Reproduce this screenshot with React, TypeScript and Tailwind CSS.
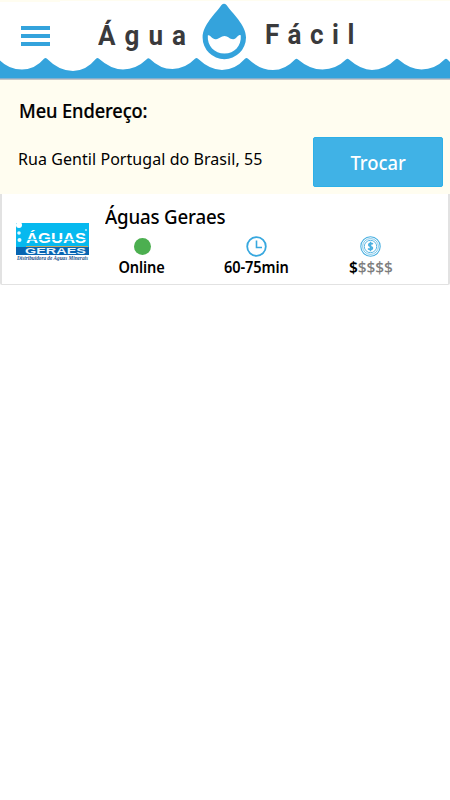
import type { ReactNode } from 'react';

interface Store {
  name: string;
  online: boolean;
  deliveryTime: string;
  priceLevel: number;
}

const store: Store = {
  name: 'Águas Geraes',
  online: true,
  deliveryTime: '60-75min',
  priceLevel: 1,
};

function Waves() {
  return (
    <svg className="absolute inset-x-0 top-0 h-20 w-full" viewBox="0 0 450 80" aria-hidden="true">
      <path
        fill="#34a3dc"
        d="M0 60.5Q9 69.5 22 69.5Q35 69.5 44 58.8Q45.5 57.2 47 58.8Q59 71 73 71Q86 71 96 58.8Q97.5 57.2 99 58.8Q111 69.5 123 69.5Q136 69.5 147 59Q148 57.4 150 59Q160 69 172.5 69Q185 69 195 58.8Q196.5 57.2 198 58.8Q210 70 222 70Q235 70 245 58.8Q246.5 57.2 248 58.8Q260 70 273 70Q285 70 295 59.4Q296.5 58 298 59.4Q310 69.5 322.5 69.5Q336 69.5 346 59.6Q347.5 58 349 59.6Q361 70 372 70Q385 70 395.5 59.6Q397 58 398.5 59.6Q410 69.5 421.5 69.5Q435 69.5 444.5 59.6Q446 58 447.5 59.6L450 62V78H0Z"
      />
      <rect y="78" width="450" height="1" fill="#83afcd" />
      <rect y="79" width="450" height="1" fill="#c4c5c8" />
    </svg>
  );
}

function DropLogo() {
  return (
    <svg className="absolute left-[202px] top-[3px] h-[57px] w-[45px]" viewBox="0 0 45 57" aria-hidden="true">
      <path fill="#34a3dc" d="M19.5 2Q22 -.4 24.5 2C30 10 44 22 44 34.5A21.7 21.7 0 0 1 .6 34.5C.6 22 14 10 19.5 2Z" />
      <path fill="#fff" d="M5.8 32.5C8 31 10 36.7 14 36.2C17.5 36 19 33 22.5 33C26 33 27.5 36.2 31 36.2C35 36.5 36 30.5 38.8 32.5C39.5 43 32.5 50.5 22.5 50.5C12.5 50.5 5 43 5.8 32.5Z" />
    </svg>
  );
}

function Header() {
  return (
    <header className="relative h-20 bg-white">
      <Waves />
      <div className="absolute inset-x-0 top-0 flex h-0.5">
        <div className="w-[60px] bg-[#fffdf0]" />
        <div className="h-px flex-1 bg-[#fffdf0]" />
      </div>
      <button aria-label="Menu" className="absolute left-[21px] top-[26px] flex w-[29px] flex-col gap-1">
        <span className="h-1 bg-[#34a3dc]" />
        <span className="h-1 bg-[#34a3dc]" />
        <span className="h-1 bg-[#34a3dc]" />
      </button>
      <h1 className="font-[Roboto,sans-serif] text-[28px] font-bold leading-8 text-[#3a3a3c]">
        <span className="absolute left-[98px] top-[20px] origin-left scale-x-[.93] tracking-[9.7px]">Água</span>
        <span className="absolute left-[265px] top-[19px] origin-left scale-x-[.93] tracking-[9.2px]">Fácil</span>
      </h1>
      <DropLogo />
    </header>
  );
}

function AddressBar() {
  return (
    <section className="flex h-[114px] flex-col bg-[#fffdf0] pl-[18px] pr-[7px] pt-[18px]">
      <h2 className="ml-[0.5px] h-[25px] origin-left scale-x-[.96] text-[19px] font-medium leading-[26px] tracking-[-0.1px] [-webkit-text-stroke:0.2px_black]">
        Meu Endereço:
      </h2>
      <div className="mt-[14px] flex items-start justify-between">
        <p className="mt-[10px] whitespace-nowrap text-[16px] leading-[25px] tracking-[0.06px]">Rua Gentil Portugal do Brasil, 55</p>
        <button className="h-[50px] w-[130px] rounded-[2px] border border-[#2db0e8] bg-[#40b2e6] pt-0.5 text-[20px] font-medium text-white">
          <span className="inline-block scale-x-[.92]">Trocar</span>
        </button>
      </div>
    </section>
  );
}

function StoreLogo() {
  return (
    <svg className="h-[40px] w-[75px] overflow-visible" viewBox="0 0 75 40">
      <rect x="1" y="1" width="73" height="24" fill="#06b9ef" />
      <rect x="1" y="25" width="73" height="8" fill="#0865b2" />
      <rect x="11" y="24" width="62" height="1" fill="#c5a561" />
      <circle cx="4" cy="3" r="3" fill="#fff" />
      <circle cx="4" cy="11" r="1.8" fill="#e5faff" />
      <circle cx="4.5" cy="18" r="2" fill="#e5faff" />
      <text x="11" y="20.5" textLength="60" lengthAdjust="spacingAndGlyphs" fill="#fff" className="font-['Liberation_Sans',sans-serif] text-[15.5px] font-bold">ÁGUAS</text>
      <rect x="10" y="17" width="61" height="0.8" fill="#06b9ef" />
      <text x="10" y="32" textLength="61" lengthAdjust="spacingAndGlyphs" fill="#e8f8ff" className="font-['Liberation_Sans',sans-serif] text-[9px] font-bold">GERAES</text>
      <circle cx="71" cy="8" r="0.9" fill="#c8f1ff" />
      <text x="2" y="38" textLength="71" lengthAdjust="spacingAndGlyphs" fill="#1c4f88" className="font-['Liberation_Serif',serif] text-[6px] font-bold italic">Distribuidora de Águas Minerais</text>
    </svg>
  );
}

function ClockIcon() {
  return (
    <svg className="size-[21px]" viewBox="0 0 21 21" fill="none" stroke="#38a8df">
      <circle cx="10.5" cy="10.5" r="9.3" strokeWidth="1.8" />
      <path d="M10.5 4.5V11.5H16" strokeWidth="1.6" />
    </svg>
  );
}

function CoinIcon() {
  return (
    <svg className="size-[21px]" viewBox="0 0 21 21" fill="none" stroke="#48afe0">
      <circle cx="10.5" cy="10.5" r="9.7" strokeWidth="1.1" />
      <circle cx="10.5" cy="10.5" r="7.9" strokeWidth=".7" />
      <circle cx="10.5" cy="10.5" r="6.2" strokeWidth=".9" />
      <path d="M12.8 8.2C12 7 8.7 7 8.7 8.9C8.7 10.9 12.5 10 12.5 12.1C12.5 14 9 13.9 8.1 12.5M10.5 5.8V15.2" strokeWidth="1.6" />
    </svg>
  );
}

function Stat({ icon, children }: { icon: ReactNode; children: ReactNode }) {
  return (
    <div className="flex w-[114px] flex-col items-center">
      <div className="flex h-[21px] items-center">{icon}</div>
      <p className="scale-x-[.94] whitespace-nowrap text-[15.5px] font-semibold leading-5 tracking-[-0.1px]">{children}</p>
    </div>
  );
}

function StoreCard({ store }: { store: Store }) {
  return (
    <article className="flex h-[91px] rounded-b-[2px] border-b border-l-2 border-r-2 border-[#e2e2e2] bg-white">
      <div className="w-[83px] pl-[13px] pt-[28px]">
        <StoreLogo />
      </div>
      <div className="flex-1 pt-[10px]">
        <h3 className="ml-5 h-[26px] origin-left scale-x-[.935] text-[20px] font-medium leading-[26px] tracking-[-0.2px]">{store.name}</h3>
        <div className="mt-[6px] flex">
          <Stat icon={<span className={`size-[17px] rounded-full ${store.online ? 'bg-[#4caf50]' : 'bg-gray-400'}`} />}>
            {store.online ? 'Online' : 'Offline'}
          </Stat>
          <Stat icon={<ClockIcon />}>{store.deliveryTime}</Stat>
          <Stat icon={<CoinIcon />}>
            <span className="inline-block translate-x-px scale-x-[1.06]">
              {'$'.repeat(store.priceLevel)}
              <span className="font-medium text-[#7c7c7c]">{'$'.repeat(5 - store.priceLevel)}</span>
            </span>
          </Stat>
        </div>
      </div>
    </article>
  );
}

export default function App() {
  return (
    <main className="h-screen overflow-hidden bg-white font-['Noto_Sans',sans-serif] text-black">
      <Header />
      <AddressBar />
      <StoreCard store={store} />
    </main>
  );
}
